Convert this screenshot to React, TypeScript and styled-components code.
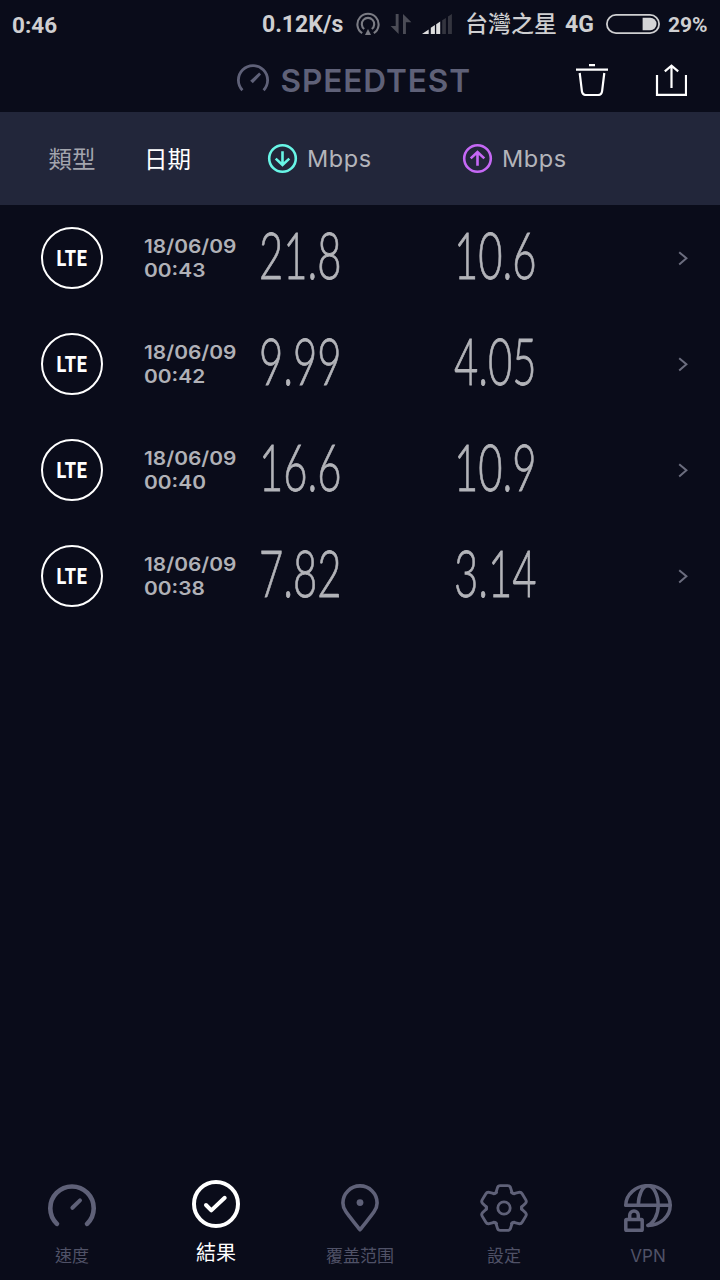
import React from "react";
import styled, { createGlobalStyle } from "styled-components";

const GlobalStyle = createGlobalStyle`
  *, *::before, *::after { box-sizing: border-box; }
  html, body { margin: 0; padding: 0; background: #0a0c1a; }
  svg { display: block; flex: none; }
`;

const sans = `Inter, "Noto Sans CJK TC", sans-serif`;

const Screen = styled.main`
  display: flex;
  flex-direction: column;
  width: 720px;
  height: 1280px;
  overflow: hidden;
  background: #0a0c1a;
  color: #b3b4ba;
  font-family: ${sans};
`;

const StatusBar = styled.div`
  display: flex;
  align-items: center;
  height: 48px;
  padding: 0 13px 0 12px;
  color: #cfcfd1;
  font: 700 23px/46px Roboto, "Noto Sans CJK TC", sans-serif;
  white-space: nowrap;
`;

const StatusText = styled.span<{ $w: number; $size?: number; $gap?: number; $weight?: number }>`
  flex: none;
  width: ${(p) => p.$w}px;
  margin-right: ${(p) => p.$gap ?? 0}px;
  padding-top: 2px;
  font-size: ${(p) => p.$size ?? 23}px;
  font-weight: ${(p) => p.$weight ?? 700};
`;

const StatusIcon = styled.span<{ $gap: number }>`
  flex: none;
  margin-right: ${(p) => p.$gap}px;
`;

const Spacer = styled.div`
  flex: 1;
`;

const TitleBar = styled.header`
  display: grid;
  grid-template-columns: 1fr 246px 1fr;
  align-items: center;
  height: 64px;
  padding: 0 33px 0 32px;
`;

const Brand = styled.div`
  grid-column: 2;
  display: flex;
  align-items: center;
  gap: 12px;
  color: #5f6178;
`;

const BrandName = styled.span`
  padding-top: 1px;
  font-size: 31.6px;
  font-weight: 600;
  line-height: 63px;
  letter-spacing: 0.9px;
  white-space: nowrap;
`;

const Actions = styled.div`
  display: flex;
  justify-content: flex-end;
  gap: 47px;
  color: #fff;
`;

const columns = "144px 116px 195px 1fr 56px";

const TableHead = styled.div`
  display: grid;
  grid-template-columns: ${columns};
  align-items: center;
  height: 93px;
  background: #22263a;
  font-size: 23.5px;
  line-height: 32px;
`;

const HeadLabel = styled.span<{ $active?: boolean; $center?: boolean }>`
  padding-bottom: 2px;
  color: ${(p) => (p.$active ? "#fff" : "#a3a5ae")};
  text-align: ${(p) => (p.$center ? "center" : "left")};
  font-family: "Noto Sans CJK TC", sans-serif;
  font-weight: 400;
`;

const UnitLabel = styled.span`
  display: flex;
  align-items: center;
  gap: 9px;
  padding-left: 7px;
  color: #b3b4ba;
  letter-spacing: 0.6px;
`;

const Results = styled.div`
  flex: 1;
`;

const ResultRow = styled.div`
  display: grid;
  grid-template-columns: ${columns};
  align-items: center;
  height: 106px;
`;

const TypeBadge = styled.div`
  display: flex;
  align-items: center;
  justify-content: center;
  justify-self: center;
  width: 62px;
  height: 62px;
  border: 2px solid #fff;
  border-radius: 50%;
  color: #fff;
`;

const TypeName = styled.span`
  padding-top: 1px;
  font: 800 22px/24px Roboto, sans-serif;
  letter-spacing: 0.7px;
  transform: scaleX(0.82);
`;

const Stamp = styled.time`
  width: max-content;
  padding-top: 1px;
  color: #b0b1b7;
  font-size: 19px;
  font-weight: 600;
  line-height: 24px;
  transform: scaleX(1.1);
  transform-origin: left center;
`;

const Speed = styled.span`
  width: max-content;
  margin-left: -1px;
  padding-bottom: 9px;
  color: #b3b4b9;
  font: 300 64.5px/80px Lato, sans-serif;
  font-kerning: none;
  -webkit-text-stroke: 0.8px #b3b4b9;
  transform: scaleX(0.648);
  transform-origin: left center;
`;

const More = styled.div`
  color: #6b6d7e;
  padding-left: 14px;
`;

const NavBar = styled.nav`
  display: grid;
  grid-template-columns: repeat(5, 1fr);
  height: 112px;
`;

const NavItem = styled.div<{ $active?: boolean }>`
  display: flex;
  flex-direction: column;
  align-items: center;
  padding-top: ${(p) => (p.$active ? 12 : 16)}px;
  color: ${(p) => (p.$active ? "#fff" : "#5f6178")};
`;

const NavLabel = styled.span<{ $active?: boolean }>`
  margin-top: ${(p) => (p.$active ? 10 : 9)}px;
  color: ${(p) => (p.$active ? "#fff" : "#505267")};
  font-size: ${(p) => (p.$active ? 20 : 17)}px;
  line-height: 30px;
`;

const SharingIcon = () => (
  <svg width="24" height="24" viewBox="0 0 24 24" fill="none" stroke="#7b7c84" strokeWidth="2.1">
    <path d="M6.2 21.2A10.6 10.6 0 1 1 17.8 21.2" />
    <path d="M8.2 17A6.2 6.2 0 1 1 15.8 17" />
    <path d="M12 17l3 6H9z" fill="#7b7c84" stroke="none" />
  </svg>
);

const DataIcon = () => (
  <svg width="22" height="20" viewBox="0 0 22 20" fill="#4b4c56">
    <path d="M5.7 0H8.6v20L0.6 12h5.1z" />
    <path d="M15.9 20H13V0l8.4 8.2h-5.5z" />
  </svg>
);

const SignalIcon = () => (
  <svg width="30" height="20" viewBox="0 0 30 20">
    <path fill="#dededf" d="M0 20L6.7 15.4V20zM8.8 20V13.7L12.9 11.1V20zM14.2 20V10.2L18.2 7.6V20z" />
    <path fill="#34353f" d="M20.2 20V6.3L23.9 4V20zM26 20V2.4L29.9 0V20z" />
  </svg>
);

const BatteryIcon = () => (
  <svg width="54" height="20" viewBox="0 0 54 20">
    <rect x="0.9" y="0.9" width="52.2" height="18.2" rx="9.1" fill="none" stroke="#cfcfd1" strokeWidth="1.8" />
    <path d="M36.6 3.8h7.7a6.2 6.2 0 0 1 0 12.4h-7.7z" fill="#d4d4d6" />
  </svg>
);

const BrandIcon = () => (
  <svg width="32" height="32" viewBox="0 0 32 32" fill="none" stroke="currentColor">
    <path d="M5.4 26.2A14.6 14.6 0 1 1 26.6 26.2" strokeWidth="2.8" />
    <path d="M13.2 16.8L22.2 8.6L24 10.4L15.8 19.2z" fill="currentColor" stroke="none" />
  </svg>
);

const TrashIcon = () => (
  <svg width="32" height="32" viewBox="0 0 32 32" fill="none" stroke="currentColor" strokeWidth="2.2">
    <path d="M13 1.2h6M0 5.6h32" />
    <path d="M3.7 9l2.2 18.2Q6.4 31 10 31h12q3.6 0 4.1-3.8L28.3 9" />
  </svg>
);

const ShareIcon = () => (
  <svg width="32" height="32" viewBox="0 0 32 32" fill="none" stroke="currentColor" strokeWidth="2.2">
    <path d="M2 11v19.8h29V11" />
    <path d="M16.5 24V1.8M9.8 7.4L16.5 1.6l6.7 5.8" />
  </svg>
);

const DirectionIcon = ({ up }: { up?: boolean }) => (
  <svg width="31" height="31" viewBox="0 0 31 31" fill="none" stroke={up ? "#c568f5" : "#68f5e6"} strokeWidth="2.6">
    <circle cx="15.5" cy="15.5" r="13.3" />
    <path d={up ? "M15.5 22.8V9M8.7 15.4l6.8-6.4 6.8 6.4" : "M15.5 8.2V22M8.7 15.6l6.8 6.4 6.8-6.4"} />
  </svg>
);

const ChevronIcon = () => (
  <svg width="12" height="16" viewBox="0 0 12 16" fill="none" stroke="currentColor" strokeWidth="2">
    <path d="M1.2 2.2l7.2 6.1L1.2 14.4" />
  </svg>
);

const NavSvg = ({ children, weight = 3 }: { children: React.ReactNode; weight?: number }) => (
  <svg
    width="48"
    height="48"
    viewBox="0 0 48 48"
    fill="none"
    stroke="currentColor"
    strokeWidth={weight}
    strokeLinecap="round"
    strokeLinejoin="round"
  >
    {children}
  </svg>
);

const tooth = "M-9.8-14.1Q-8-14.5-7.5-16.3L-6.4-20.2Q-5.8-22.4-3.6-22.4H3.6Q5.8-22.4 6.4-20.2L7.5-16.3Q8-14.5 9.8-14.1";

const navItems = [
  {
    label: "速度",
    icon: (
      <NavSvg weight={4.6}>
        <path d="M8.9 39.8A21.7 21.7 0 1 1 39.1 39.8" />
        <path d="M24.4 23.8L32 16.4" strokeWidth="4" />
      </NavSvg>
    ),
  },
  {
    label: "結果",
    active: true,
    icon: (
      <NavSvg weight={4}>
        <circle cx="24" cy="24" r="22" />
        <path d="M14 25l5.3 5.4L32.7 17.8" />
      </NavSvg>
    ),
  },
  {
    label: "覆盖范围",
    icon: (
      <NavSvg weight={3.6}>
        <path d="M24 45.8C20 40.4 13.5 33 10 27.8C8 25 6.9 22.6 6.9 19A17.1 17.1 0 0 1 41.1 19C41.1 22.6 40 25 38 27.8C34.5 33 28 40.4 24 45.8z" />
        <circle cx="24" cy="18.6" r="3.4" fill="currentColor" stroke="none" />
      </NavSvg>
    ),
  },
  {
    label: "設定",
    icon: (
      <NavSvg weight={2.8}>
        <g transform="translate(24 24)">
          {[0, 60, 120, 180, 240, 300].map((angle) => (
            <path key={angle} d={tooth} transform={`scale(1.03 1) rotate(${angle})`} />
          ))}
          <circle r="6.2" />
        </g>
      </NavSvg>
    ),
  },
  {
    label: "VPN",
    icon: (
      <NavSvg weight={3.5}>
        <path d="M1.8 21.3A22.2 19.7 0 0 1 46.2 21.3C46.2 32.5 36.5 41.2 24 41.4" />
        <path d="M14.3 21.3C14.3 11 18.5 1.8 24 1.8S34.2 11 34.2 21.3C34.2 31 29.5 39 24 41.4" />
        <path d="M1.8 21.3h44.4" />
        <rect x="1.8" y="35.6" width="16.4" height="10.6" rx="0.8" />
        <path d="M5.7 35V31.2a4.3 4.3 0 0 1 8.6 0V35" />
      </NavSvg>
    ),
  },
];

const results = [
  { date: "18/06/09", time: "00:43", down: "21.8", up: "10.6" },
  { date: "18/06/09", time: "00:42", down: "9.99", up: "4.05" },
  { date: "18/06/09", time: "00:40", down: "16.6", up: "10.9" },
  { date: "18/06/09", time: "00:38", down: "7.82", up: "3.14" },
];

export default function App() {
  return (
    <Screen>
      <GlobalStyle />
      <StatusBar>
        <StatusText $w={48} $size={22.5}>0:46</StatusText>
        <Spacer />
        <StatusText $w={82} $gap={12}>0.12K/s</StatusText>
        <StatusIcon $gap={10}><SharingIcon /></StatusIcon>
        <StatusIcon $gap={10}><DataIcon /></StatusIcon>
        <StatusIcon $gap={13}><SignalIcon /></StatusIcon>
        <StatusText $w={92} $gap={8} $weight={500}>台灣之星</StatusText>
        <StatusText $w={29} $gap={12}>4G</StatusText>
        <StatusIcon $gap={8}><BatteryIcon /></StatusIcon>
        <StatusText $w={39} $size={21}>29%</StatusText>
      </StatusBar>
      <TitleBar>
        <Brand>
          <BrandIcon />
          <BrandName>SPEEDTEST</BrandName>
        </Brand>
        <Actions>
          <TrashIcon />
          <ShareIcon />
        </Actions>
      </TitleBar>
      <TableHead>
        <HeadLabel $center>類型</HeadLabel>
        <HeadLabel $active>日期</HeadLabel>
        <UnitLabel><DirectionIcon />Mbps</UnitLabel>
        <UnitLabel><DirectionIcon up />Mbps</UnitLabel>
      </TableHead>
      <Results>
        {results.map((r) => (
          <ResultRow key={r.time}>
            <TypeBadge><TypeName>LTE</TypeName></TypeBadge>
            <Stamp>{r.date}<br />{r.time}</Stamp>
            <Speed>{r.down}</Speed>
            <Speed>{r.up}</Speed>
            <More><ChevronIcon /></More>
          </ResultRow>
        ))}
      </Results>
      <NavBar>
        {navItems.map((item) => (
          <NavItem key={item.label} $active={item.active}>
            {item.icon}
            <NavLabel $active={item.active}>{item.label}</NavLabel>
          </NavItem>
        ))}
      </NavBar>
    </Screen>
  );
}
